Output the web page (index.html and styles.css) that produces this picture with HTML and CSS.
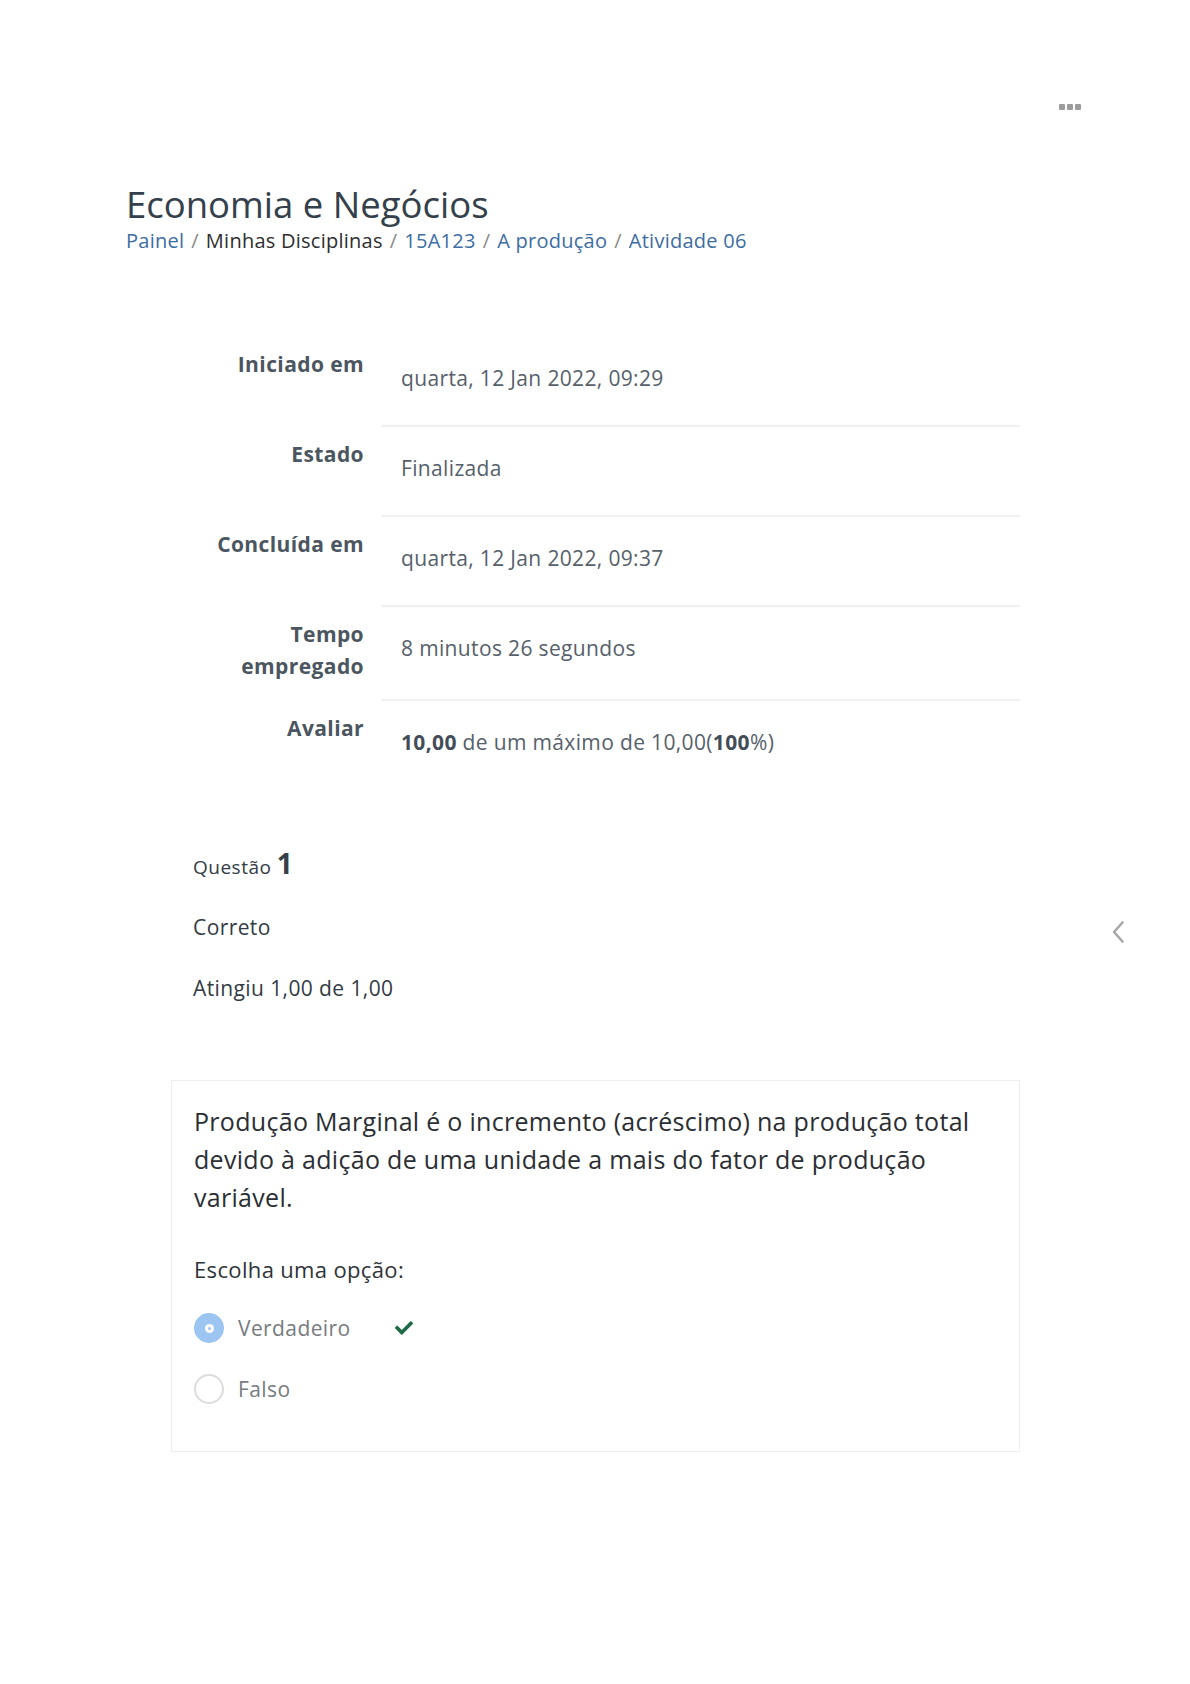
FILE: index.html
```html
<!DOCTYPE html>
<html lang="pt">
<head>
<meta charset="utf-8">
<title>Economia e Negócios</title>
<link rel="stylesheet" href="styles.css">
</head>
<body>
<div class="page">
  <div class="topbar">
    <span class="dots"><i></i><i></i><i></i></span>
  </div>
  <header class="page-header">
    <h1 class="title">Economia e Negócios</h1>
    <nav class="breadcrumb">
      <a href="#">Painel</a><span class="sep">/</span><span class="plain">Minhas Disciplinas</span><span class="sep">/</span><a href="#">15A123</a><span class="sep">/</span><a href="#">A produção</a><span class="sep">/</span><a href="#">Atividade 06</a>
    </nav>
  </header>

  <section class="summary">
    <div class="row"><div class="label">Iniciado em</div><div class="value">quarta, 12 Jan 2022, 09:29</div></div>
    <div class="row"><div class="label">Estado</div><div class="value">Finalizada</div></div>
    <div class="row"><div class="label">Concluída em</div><div class="value">quarta, 12 Jan 2022, 09:37</div></div>
    <div class="row"><div class="label">Tempo<br>empregado</div><div class="value">8 minutos 26 segundos</div></div>
    <div class="row last"><div class="label">Avaliar</div><div class="value"><b>10,00</b> de um máximo de 10,00(<b>100</b>%)</div></div>
  </section>

  <section class="question">
    <div class="info">
      <div class="qno">Questão <span class="num">1</span></div>
      <div class="state">Correto</div>
      <div class="grade">Atingiu 1,00 de 1,00</div>
    </div>
    <div class="card">
      <p class="qtext">Produção Marginal é o incremento (acréscimo) na produção total devido à adição de uma unidade a mais do fator de produção variável.</p>
      <div class="prompt">Escolha uma opção:</div>
      <div class="options">
        <div class="option">
          <span class="radio checked"><span class="dot"></span></span>
          <span class="opt-label">Verdadeiro</span>
          <svg class="check" viewBox="0 0 512 512" width="18" height="18"><path fill="#1d6a46" d="M173.9 439.4l-166.4-166.4c-10-10-10-26.2 0-36.2l36.2-36.2c10-10 26.2-10 36.2 0L192 312.7 432.1 72.6c10-10 26.2-10 36.2 0l36.2 36.2c10 10 10 26.2 0 36.2l-294.4 294.4c-10 10-26.2 10-36.2 0z"/></svg>
        </div>
        <div class="option">
          <span class="radio"></span>
          <span class="opt-label">Falso</span>
        </div>
      </div>
    </div>
  </section>

  <button class="drawer-toggle" aria-label="Abrir">
    <svg viewBox="0 0 14 24" width="14" height="24"><path d="M11.5 2.5 L3 12 L11.5 21.5" fill="none" stroke="#a8a8a8" stroke-width="2.6" stroke-linecap="round" stroke-linejoin="round"/></svg>
  </button>
</div>
</body>
</html>
```

FILE: styles.css
```css
* { box-sizing: border-box; }
html, body { margin: 0; padding: 0; background: #fff; }
body {
  font-family: "Open Sans", "Noto Sans", sans-serif;
  color: #333;
}
.page {
  position: relative;
  width: 1190px;
  min-height: 1684px;
  padding: 0 0 0 126px;
}
.topbar {
  display: flex;
  justify-content: flex-end;
  padding: 104px 109px 0 0;
  height: 112px;
}
.dots { display: flex; gap: 2px; }
.dots i {
  display: block;
  width: 6px;
  height: 6px;
  border-radius: 1px;
  background: #9c9c9c;
}
.page-header { margin-top: 70px; }
.title {
  margin: 0;
  font-size: 36.5px;
  font-weight: 400;
  line-height: 44px;
  color: #34404b;
}
.breadcrumb {
  margin-top: 0;
  font-size: 20px;
  letter-spacing: 0.25px;
  line-height: 30px;
  color: #333;
}
.breadcrumb a { color: #3d6da2; text-decoration: none; }
.breadcrumb .sep { color: #8a8a8a; margin: 0 7px; }
.breadcrumb .plain { color: #2e2e2e; }

.summary {
  margin-top: 81px;
  width: 894px;
}
.row {
  display: grid;
  grid-template-columns: 238px 639px;
  column-gap: 17px;
}
.label {
  text-align: right;
  font-weight: 700;
  font-size: 21px;
  letter-spacing: 0.4px;
  line-height: 32px;
  color: #4b5660;
  padding: 11px 0 19px;
}
.value {
  font-size: 21px;
  letter-spacing: 0.35px;
  line-height: 32px;
  color: #56606a;
  padding: 25px 0 31px 20px;
  border-bottom: 2px solid #eef2f2;
}
.row.last .value { border-bottom: none; }
.value b { font-weight: 700; color: #434d57; }

.question { margin-top: 59px; }
.info { padding-left: 67px; color: #333b44; }
.qno { font-size: 19px; letter-spacing: 0.5px; line-height: 30px; }
.qno .num { font-size: 28px; font-weight: 700; color: #34404b; letter-spacing: 0; }
.state { font-size: 21px; letter-spacing: 0.4px; line-height: 30px; margin-top: 30px; }
.grade { font-size: 21px; letter-spacing: 0.4px; line-height: 30px; margin-top: 31px; }

.card {
  margin: 77px 0 0 45px;
  width: 849px;
  border: 1px solid #eceff1;
  padding: 21px 22px 46px;
}
.qtext {
  margin: 0;
  font-size: 25px;
  letter-spacing: 0.3px;
  line-height: 38px;
  color: #2b2e33;
}
.prompt {
  margin-top: 38px;
  font-size: 22px;
  letter-spacing: 0.35px;
  line-height: 30px;
  color: #2e3338;
}
.options { margin-top: 28px; display: flex; flex-direction: column; gap: 29px; }
.option { display: flex; align-items: center; height: 32px; }
.radio {
  flex: none;
  width: 30px;
  height: 30px;
  border-radius: 50%;
  border: 2px solid #dcdcdc;
  background: #fff;
  display: flex;
  align-items: center;
  justify-content: center;
}
.radio.checked { background: #9cc5f1; border-color: #9cc5f1; }
.radio .dot {
  width: 9px;
  height: 9px;
  border-radius: 50%;
  background: #fff;
  position: relative;
}
.radio .dot::after {
  content: "";
  position: absolute;
  left: 3px; top: 3px;
  width: 3px; height: 3px;
  border-radius: 50%;
  background: #9cc5f1;
}
.opt-label {
  margin-left: 14px;
  font-size: 21px;
  letter-spacing: 0.4px;
  color: #777b80;
  width: 157px;
}
.check { display: block; }

.drawer-toggle {
  position: absolute;
  left: 1111px;
  top: 920px;
  border: 0;
  background: none;
  padding: 0;
}
```
